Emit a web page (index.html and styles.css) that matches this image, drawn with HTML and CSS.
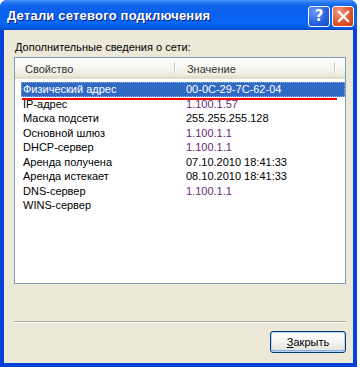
FILE: index.html
```html
<!DOCTYPE html>
<html lang="ru">
<head>
    <meta charset="UTF-8">
    <title>Детали сетевого подключения</title>
    <link rel="stylesheet" href="styles.css">
</head>
<body>
    <div class="window">
        <div class="titlebar">
            <span class="title">Детали сетевого подключения</span>
            <div class="controls">
                <button class="tb-btn tb-help">?</button>
                <button class="tb-btn tb-close">
                    <svg width="13" height="13" viewBox="0 0 13 13">
                        <path d="M2 2 L11 11 M11 2 L2 11" stroke="#fff" stroke-width="2.4" stroke-linecap="square"/>
                    </svg>
                </button>
            </div>
        </div>

        <div class="content">
            <div class="caption"><u>Д</u>ополнительные сведения о сети:</div>

            <div class="listview">
                <div class="lv-header">
                    <div class="hcol hcol-prop">Свойство</div>
                    <div class="hcol hcol-val">Значение</div>
                    <div class="hcol hcol-rest"></div>
                </div>
                <div class="lv-rows">
                    <div class="row selected">
                        <span class="cell-prop">Физический адрес</span>
                        <span class="cell-val">00-0C-29-7C-62-04</span>
                        <span class="mark"></span>
                    </div>
                    <div class="row"><span class="cell-prop">IP-адрес</span><span class="cell-val purple">1.100.1.57</span></div>
                    <div class="row"><span class="cell-prop">Маска подсети</span><span class="cell-val">255.255.255.128</span></div>
                    <div class="row"><span class="cell-prop">Основной шлюз</span><span class="cell-val purple">1.100.1.1</span></div>
                    <div class="row"><span class="cell-prop">DHCP-сервер</span><span class="cell-val purple">1.100.1.1</span></div>
                    <div class="row"><span class="cell-prop">Аренда получена</span><span class="cell-val">07.10.2010 18:41:33</span></div>
                    <div class="row"><span class="cell-prop">Аренда истекает</span><span class="cell-val">08.10.2010 18:41:33</span></div>
                    <div class="row"><span class="cell-prop">DNS-сервер</span><span class="cell-val purple">1.100.1.1</span></div>
                    <div class="row"><span class="cell-prop">WINS-сервер</span><span class="cell-val"></span></div>
                </div>
            </div>

            <div class="separator"></div>

            <div class="footer">
                <button class="btn"><u>З</u>акрыть</button>
            </div>
        </div>
    </div>
</body>
</html>
```

FILE: styles.css
```css
* {
    margin: 0;
    padding: 0;
    box-sizing: border-box;
}

body {
    background: #fff;
    font-family: 'Liberation Sans', Arial, sans-serif;
    font-size: 11px;
    color: #000;
    width: 360px;
    height: 367px;
    overflow: hidden;
}

.window {
    width: 357px;
    height: 367px;
    display: flex;
    flex-direction: column;
    background: #0841d8;
    border-radius: 7px 7px 0 0;
    overflow: hidden;
}

/* Title bar */
.titlebar {
    height: 30px;
    flex: none;
    display: flex;
    align-items: center;
    justify-content: space-between;
    padding: 0 3px 0 7px;
    background: linear-gradient(to bottom,
        #4a95f8 0%,
        #2a7af5 8%,
        #0f64ec 20%,
        #0a5fef 45%,
        #0867f5 75%,
        #055ce4 92%,
        #0446c8 100%);
}

.title {
    color: #fff;
    font-weight: bold;
    font-size: 13px;
    text-shadow: 1px 1px 0 #0a1f73;
    letter-spacing: 0.2px;
    padding-top: 1px;
}

.controls {
    display: flex;
    gap: 2px;
    padding-top: 2px;
}

.tb-btn {
    width: 22px;
    height: 21px;
    border: 1px solid #fff;
    border-radius: 3px;
    display: flex;
    align-items: center;
    justify-content: center;
    color: #fff;
    font-family: 'DejaVu Sans', sans-serif;
    font-weight: bold;
    font-size: 15px;
}

.tb-help {
    background: radial-gradient(circle at 30% 25%, #6d9cf5 0%, #2a63e0 55%, #1848c8 100%);
}

.tb-close {
    background: radial-gradient(circle at 30% 25%, #f09a80 0%, #e0552c 55%, #c63f18 100%);
}

/* Client area */
.content {
    flex: 1;
    margin: 0 4px 4px 4px;
    background: #ece9d8;
    padding: 8px 7px 0 10px;
    display: flex;
    flex-direction: column;
}

.caption {
    height: 19px;
    padding-left: 1px;
    padding-top: 3px;
}

.listview {
    height: 227px;
    background: #fff;
    border: 1px solid #7f9db9;
}

.lv-header {
    display: flex;
    height: 21px;
    background: linear-gradient(to bottom, #fff 0%, #f6f5ee 60%, #ebeadb 100%);
    border-bottom: 3px solid #e2dfcc;
}

.hcol {
    color: #333;
    padding: 5px 0 0 10px;
    position: relative;
}

.hcol-prop {
    width: 164px;
}

.hcol-val {
    width: 164px;
    padding-left: 12px;
}

.hcol-prop::after,
.hcol-val::after {
    content: "";
    position: absolute;
    right: 0;
    top: 4px;
    bottom: 3px;
    width: 1px;
    background: #c7c5b2;
    box-shadow: 1px 0 0 #fff;
}

.hcol-rest {
    flex: 1;
}

.lv-rows {
    padding: 3px 0 0 6px;
}

.row {
    display: flex;
    height: 14.5px;
    line-height: 14.5px;
    position: relative;
}

.cell-prop {
    width: 159px;
    padding-left: 2px;
}

.cell-val {
    flex: 1;
    padding-left: 6px;
}

.purple {
    color: #6a2878;
}

.row.selected {
    background: #316ac5;
    color: #fff;
    outline: 1px dotted #8fb0e6;
    outline-offset: -1px;
}

.mark {
    position: absolute;
    left: 1px;
    right: 8px;
    bottom: -3px;
    height: 2px;
    background: #f00;
}

.separator {
    margin-top: 37px;
    height: 2px;
    border-top: 1px solid #aca899;
    border-bottom: 1px solid #fff;
}

.footer {
    display: flex;
    justify-content: flex-end;
    padding-top: 8px;
}

.btn {
    width: 76px;
    height: 22px;
    font-family: 'Liberation Sans', Arial, sans-serif;
    font-size: 11px;
    color: #000;
    background: linear-gradient(to bottom, #fff 0%, #f4f4f0 50%, #e6e5de 90%, #d6d0c5 100%);
    border: 1px solid #003c74;
    border-radius: 3px;
    box-shadow: inset 0 0 0 1px #b9d1f4, inset 0 -1px 0 1px #89ade4;
}
```
